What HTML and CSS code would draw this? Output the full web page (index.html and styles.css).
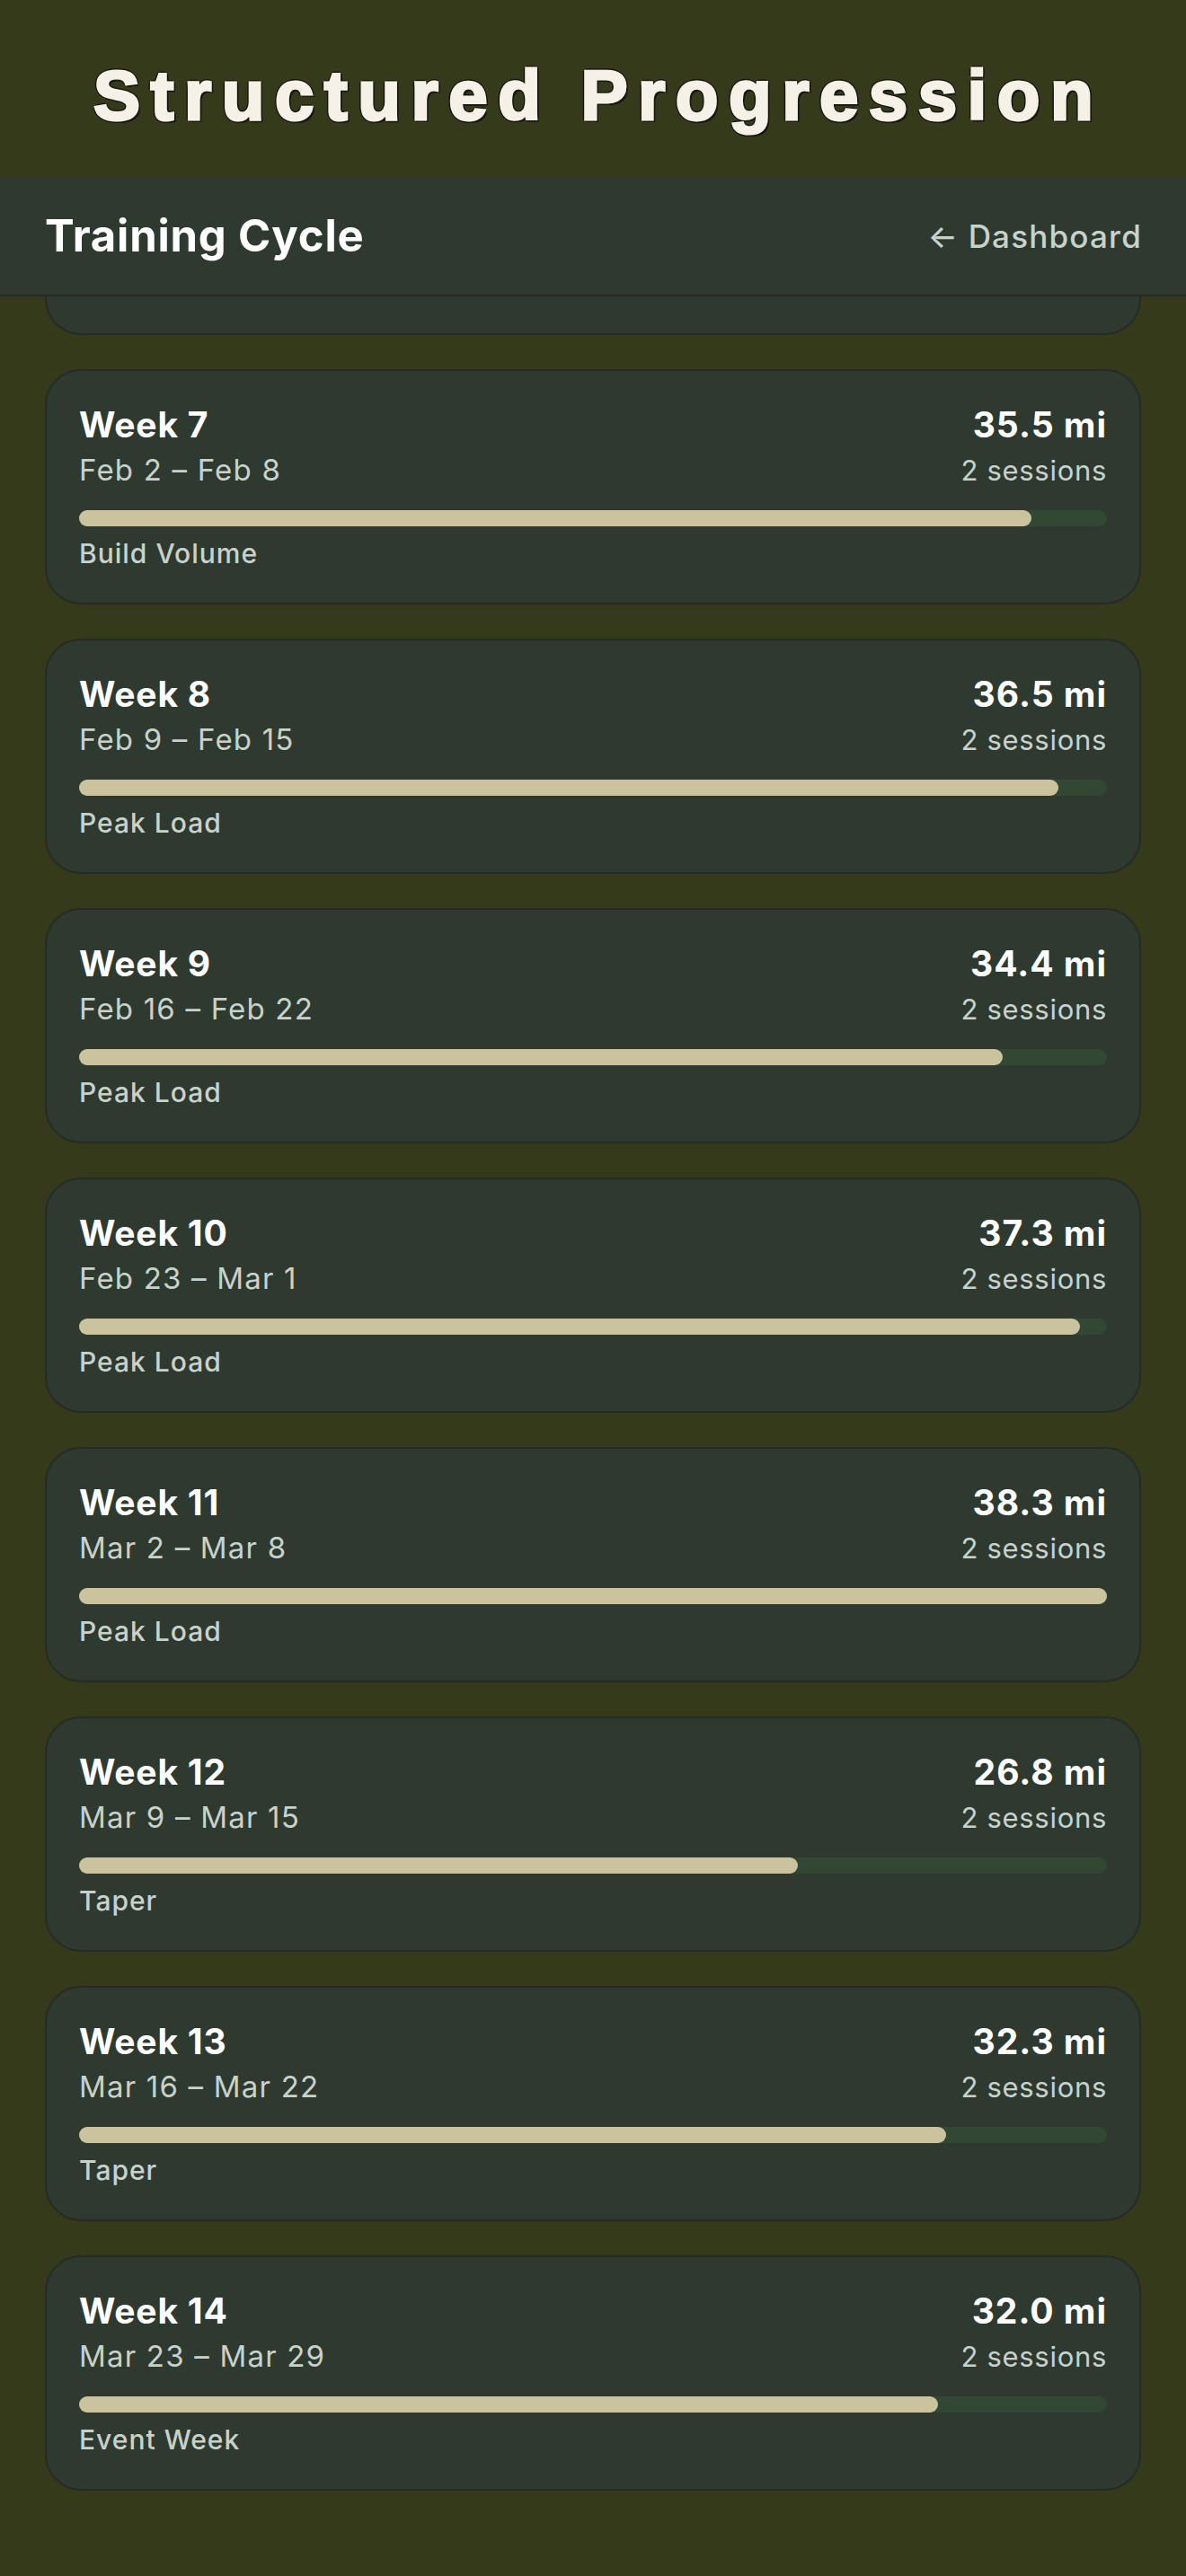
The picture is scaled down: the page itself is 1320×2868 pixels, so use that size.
FILE: index.html
```html
<!DOCTYPE html>
<html lang="en">
<head>
    <meta charset="UTF-8">
    <meta name="viewport" content="width=device-width, initial-scale=1.0">
    <title>Training Cycle</title>
    <link rel="stylesheet" href="styles.css">
</head>
<body>

<div class="banner">
    <h1>Structured Progression</h1>
</div>

<div class="topbar">
    <h2>Training Cycle</h2>
    <a href="#" class="back-link">&larr; Dashboard</a>
</div>

<div class="week-list">
    <!-- bottom of the week 6 card, scrolled under the bar -->
    <div class="card card-peek"></div>

    <div class="card">
        <div class="card-top">
            <div>
                <h3>Week 7</h3>
                <p class="dates">Feb 2 – Feb 8</p>
            </div>
            <div class="stats">
                <span class="miles">35.5 mi</span>
                <span class="sessions">2 sessions</span>
            </div>
        </div>
        <div class="bar"><div class="fill" style="width: 92.69%"></div></div>
        <p class="phase">Build Volume</p>
    </div>

    <div class="card">
        <div class="card-top">
            <div>
                <h3>Week 8</h3>
                <p class="dates">Feb 9 – Feb 15</p>
            </div>
            <div class="stats">
                <span class="miles">36.5 mi</span>
                <span class="sessions">2 sessions</span>
            </div>
        </div>
        <div class="bar"><div class="fill" style="width: 95.30%"></div></div>
        <p class="phase">Peak Load</p>
    </div>

    <div class="card">
        <div class="card-top">
            <div>
                <h3>Week 9</h3>
                <p class="dates">Feb 16 – Feb 22</p>
            </div>
            <div class="stats">
                <span class="miles">34.4 mi</span>
                <span class="sessions">2 sessions</span>
            </div>
        </div>
        <div class="bar"><div class="fill" style="width: 89.82%"></div></div>
        <p class="phase">Peak Load</p>
    </div>

    <div class="card">
        <div class="card-top">
            <div>
                <h3>Week 10</h3>
                <p class="dates">Feb 23 – Mar 1</p>
            </div>
            <div class="stats">
                <span class="miles">37.3 mi</span>
                <span class="sessions">2 sessions</span>
            </div>
        </div>
        <div class="bar"><div class="fill" style="width: 97.39%"></div></div>
        <p class="phase">Peak Load</p>
    </div>

    <div class="card">
        <div class="card-top">
            <div>
                <h3>Week 11</h3>
                <p class="dates">Mar 2 – Mar 8</p>
            </div>
            <div class="stats">
                <span class="miles">38.3 mi</span>
                <span class="sessions">2 sessions</span>
            </div>
        </div>
        <div class="bar"><div class="fill" style="width: 100%"></div></div>
        <p class="phase">Peak Load</p>
    </div>

    <div class="card">
        <div class="card-top">
            <div>
                <h3>Week 12</h3>
                <p class="dates">Mar 9 – Mar 15</p>
            </div>
            <div class="stats">
                <span class="miles">26.8 mi</span>
                <span class="sessions">2 sessions</span>
            </div>
        </div>
        <div class="bar"><div class="fill" style="width: 69.97%"></div></div>
        <p class="phase">Taper</p>
    </div>

    <div class="card">
        <div class="card-top">
            <div>
                <h3>Week 13</h3>
                <p class="dates">Mar 16 – Mar 22</p>
            </div>
            <div class="stats">
                <span class="miles">32.3 mi</span>
                <span class="sessions">2 sessions</span>
            </div>
        </div>
        <div class="bar"><div class="fill" style="width: 84.33%"></div></div>
        <p class="phase">Taper</p>
    </div>

    <div class="card">
        <div class="card-top">
            <div>
                <h3>Week 14</h3>
                <p class="dates">Mar 23 – Mar 29</p>
            </div>
            <div class="stats">
                <span class="miles">32.0 mi</span>
                <span class="sessions">2 sessions</span>
            </div>
        </div>
        <div class="bar"><div class="fill" style="width: 83.55%"></div></div>
        <p class="phase">Event Week</p>
    </div>
</div>

</body>
</html>
```

FILE: styles.css
```css
html {
    background-color: #353a1a;
}
body {
    font-family: Inter, "Noto Sans", sans-serif;
    background-color: #353a1a;
    color: #fff;
    margin: 0;
    padding: 0;
}
.banner {
    height: 197px;
    box-sizing: border-box;
    padding-top: 61px;
}
.banner h1 {
    margin: 0;
    padding-left: 12px;
    font-family: "Liberation Sans", Arial, sans-serif;
    font-size: 78px;
    font-weight: bold;
    line-height: 90px;
    letter-spacing: 11.5px;
    text-align: center;
    color: #f5f1e6;
    -webkit-text-stroke: 3px #f5f1e6;
    text-shadow: -2px -2px 0 #161811, 2px -2px 0 #161811, -2px 2px 0 #161811, 2px 2px 0 #161811,
        0 -3px 0 #161811, 0 3px 0 #161811, -3px 0 0 #161811, 3px 0 0 #161811, 3px 3px 0 #161811;
}
.topbar {
    height: 131px;
    display: flex;
    align-items: center;
    justify-content: space-between;
    padding: 0 49px 0 50px;
    background-color: #2e3a30;
    border-bottom: 2px solid #262b25;
}
.topbar h2 {
    margin: 0;
    font-size: 49px;
    font-weight: 700;
    letter-spacing: 0.8px;
}
.back-link {
    color: #c9d2ca;
    text-decoration: none;
    font-size: 35px;
    font-weight: 500;
    letter-spacing: 1.2px;
}
.week-list {
    display: flex;
    flex-direction: column;
    gap: 38px;
    padding: 0 50px 97px;
}
.card {
    background-color: #2e3a30;
    border: 2px solid #262b25;
    border-radius: 40px;
    padding: 37px 36px;
}
.card-peek {
    height: 41px;
    padding: 0;
    border-top: 0;
    border-radius: 0 0 40px 40px;
}
.card-top {
    display: flex;
    justify-content: space-between;
}
.card h3 {
    margin: 0;
    font-size: 39px;
    font-weight: 700;
    line-height: 46px;
    letter-spacing: 0.8px;
}
.dates {
    margin: 8px 0 0;
    font-size: 33px;
    line-height: 39px;
    letter-spacing: 1.2px;
    color: #c9d2ca;
}
.stats {
    display: flex;
    flex-direction: column;
    align-items: flex-end;
}
.miles {
    font-size: 39px;
    font-weight: 700;
    line-height: 46px;
    letter-spacing: 1px;
}
.sessions {
    margin-top: 8px;
    font-size: 31px;
    line-height: 39px;
    letter-spacing: 0.7px;
    color: #c9d2ca;
}
.bar {
    height: 18px;
    margin-top: 25px;
    background-color: #324834;
    border-radius: 9px;
}
.fill {
    height: 100%;
    background-color: #cbc29e;
    border-radius: 9px;
}
.phase {
    margin: 12px 0 0;
    font-size: 30px;
    line-height: 36px;
    font-weight: 500;
    letter-spacing: 1px;
    color: #c9d2ca;
}
```
